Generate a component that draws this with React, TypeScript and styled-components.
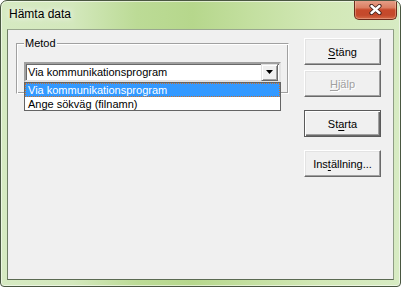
import React from 'react';
import styled, { createGlobalStyle } from 'styled-components';

const GlobalStyle = createGlobalStyle`
  html, body {
    margin: 0;
    padding: 0;
    background: #ffffff;
  }

  body {
    font-family: "Liberation Sans", Arial, sans-serif;
    font-size: 11px;
  }
`;

const Window = styled.div`
  box-sizing: border-box;
  width: 401px;
  height: 287px;
  display: flex;
  flex-direction: column;
  border: 1px solid #4a5741;
  border-radius: 7px 7px 4px 4px;
  background: linear-gradient(
    90deg,
    #d6eac2 0%,
    #d3e8bc 18%,
    #bcdb96 34%,
    #b6d78c 48%,
    #c3df9f 62%,
    #d2e8b6 80%,
    #d7ebc3 100%
  );
  box-shadow: inset 0 0 0 1px rgba(255, 255, 255, 0.55);
  overflow: hidden;
`;

const TitleBar = styled.div`
  height: 28px;
  display: flex;
  align-items: flex-start;
  justify-content: space-between;
  padding: 0 3px 0 8px;
`;

const Title = styled.div`
  padding-top: 6px;
  font-size: 12px;
  line-height: 15px;
  color: #000;
  text-shadow: 0 0 6px rgba(255, 255, 255, 0.9), 0 0 10px rgba(255, 255, 255, 0.7);
`;

const CloseButton = styled.button`
  box-sizing: border-box;
  width: 43px;
  height: 20px;
  margin-top: -1px;
  padding: 0;
  display: flex;
  align-items: center;
  justify-content: center;
  border: 1px solid #6b2b1c;
  border-top: none;
  border-radius: 0 0 5px 5px;
  background: linear-gradient(#e6a28c 0%, #db7f63 40%, #c7492b 52%, #c4492c 80%, #d56a47 100%);
  box-shadow: inset 0 0 0 1px rgba(255, 220, 200, 0.35);
`;

const Frame = styled.div`
  flex: 1;
  display: flex;
  padding: 0 6px 6px 6px;
`;

const Client = styled.div`
  box-sizing: border-box;
  flex: 1;
  display: flex;
  align-items: flex-start;
  padding: 8px 12px 0 8px;
  background: #f0f0f0;
  border: 1px solid;
  border-color: #9aa88f #8e9c84 #5b6a52 #6f7e65;
`;

const GroupBox = styled.fieldset`
  box-sizing: border-box;
  width: 273px;
  margin: -1px 0 0 0;
  padding: 12px 7px 11px 7px;
  border: 1px solid;
  border-color: #a0a0a0 #ffffff #ffffff #a0a0a0;
  box-shadow: inset 1px 1px 0 #ffffff, inset -1px -1px 0 #a0a0a0;
`;

const GroupLabel = styled.legend`
  padding: 0 1px;
  font-size: 11px;
  line-height: 13px;
  color: #000;
  background: #f0f0f0;
`;

const ComboWrap = styled.div`
  position: relative;
  width: 257px;
`;

const Combo = styled.div`
  box-sizing: border-box;
  height: 20px;
  display: flex;
  align-items: center;
  justify-content: space-between;
  padding: 0 1px 0 2px;
  background: #fff;
  border: 2px solid;
  border-color: #a0a0a0 #e3e3e3 #e3e3e3 #a0a0a0;
  box-shadow: inset 1px 1px 0 #696969;
`;

const ComboText = styled.span`
  line-height: 13px;
  color: #000;
`;

const ArrowButton = styled.div`
  box-sizing: border-box;
  width: 17px;
  height: 17px;
  display: flex;
  align-items: center;
  justify-content: center;
  background: #f0f0f0;
  border: 1px solid;
  border-color: #e3e3e3 #696969 #696969 #e3e3e3;
  box-shadow: inset 1px 1px 0 #fff, inset -1px -1px 0 #a0a0a0;
`;

const DropList = styled.ul`
  position: absolute;
  top: 100%;
  left: 0;
  right: 0;
  margin: 0;
  padding: 0;
  list-style: none;
  background: #fff;
  border: 1px solid #646464;
  z-index: 2;
`;

const Option = styled.li<{ $selected?: boolean }>`
  box-sizing: border-box;
  height: 14px;
  padding: 0 0 0 2px;
  line-height: 12px;
  color: ${(p) => (p.$selected ? '#fff' : '#000')};
  background: ${(p) => (p.$selected ? '#3399ff' : 'transparent')};
  border: 1px ${(p) => (p.$selected ? 'dotted #c8702e' : 'solid transparent')};

  &:last-child {
    height: 13px;
  }
`;

const ButtonColumn = styled.div`
  display: flex;
  flex-direction: column;
  margin-left: auto;
`;

const DialogButton = styled.button<{ $gap?: number; $default?: boolean }>`
  box-sizing: border-box;
  width: 77px;
  height: 27px;
  margin-top: ${(p) => p.$gap ?? 0}px;
  padding: 0;
  font-family: "Liberation Sans", Arial, sans-serif;
  font-size: 11px;
  color: #000;
  background: #f0f0f0;
  border: 1px solid;
  border-color: ${(p) => (p.$default ? '#5a5a5a' : '#ffffff #696969 #696969 #ffffff')};
  box-shadow: ${(p) =>
    p.$default
      ? 'inset 1px 1px 0 #fff, inset -1px -1px 0 #696969, inset -2px -2px 0 #a0a0a0'
      : 'inset -1px -1px 0 #a0a0a0, inset 1px 1px 0 #e3e3e3'};

  &:disabled {
    color: #a0a0a0;
    text-shadow: 1px 1px 0 #fff;
  }
`;

const Key = styled.u`
  text-decoration: underline;
  text-underline-offset: 2px;
`;

const CloseGlyph = () => (
  <svg width="13" height="11" viewBox="0 0 13 11">
    <path d="M2.5 2 L10.5 9 M10.5 2 L2.5 9" stroke="#40201a" strokeWidth="4.2" strokeLinecap="round" />
    <path d="M2.5 2 L10.5 9 M10.5 2 L2.5 9" stroke="#ffffff" strokeWidth="2.4" strokeLinecap="round" />
  </svg>
);

const DownArrow = () => (
  <svg width="7" height="4" viewBox="0 0 7 4">
    <path d="M0 0 H7 L3.5 4 Z" fill="#000" />
  </svg>
);

const App: React.FC = () => {
  return (
    <>
      <GlobalStyle />
      <Window>
        <TitleBar>
          <Title>Hämta data</Title>
          <CloseButton aria-label="Stäng">
            <CloseGlyph />
          </CloseButton>
        </TitleBar>

        <Frame>
          <Client>
            <GroupBox>
              <GroupLabel>Metod</GroupLabel>
              <ComboWrap>
                <Combo>
                  <ComboText>Via kommunikationsprogram</ComboText>
                  <ArrowButton>
                    <DownArrow />
                  </ArrowButton>
                </Combo>
                <DropList>
                  <Option $selected>Via kommunikationsprogram</Option>
                  <Option>Ange sökväg (filnamn)</Option>
                </DropList>
              </ComboWrap>
            </GroupBox>

            <ButtonColumn>
              <DialogButton>
                <Key>S</Key>täng
              </DialogButton>
              <DialogButton $gap={5} disabled>
                <Key>H</Key>jälp
              </DialogButton>
              <DialogButton $gap={13} $default>
                St<Key>a</Key>rta
              </DialogButton>
              <DialogButton $gap={13}>
                Ins<Key>t</Key>ällning...
              </DialogButton>
            </ButtonColumn>
          </Client>
        </Frame>
      </Window>
    </>
  );
};

export default App;
